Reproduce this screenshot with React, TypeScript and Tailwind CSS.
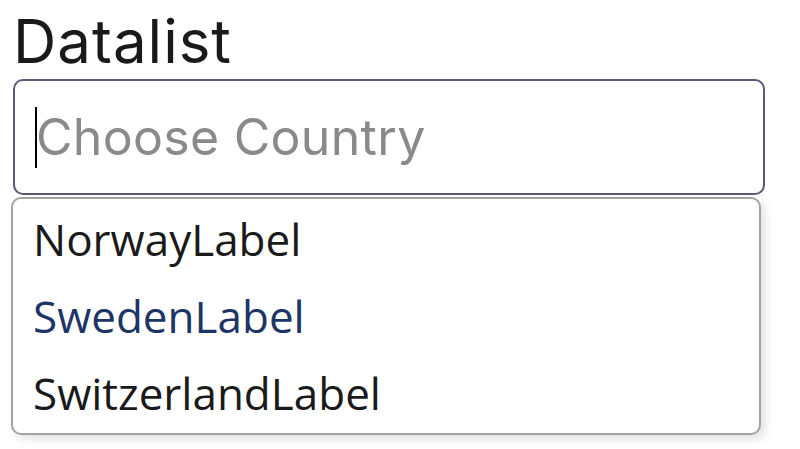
const options = ["NorwayLabel", "SwedenLabel", "SwitzerlandLabel"];

export default function App() {
  return (
    <div
      className="h-[449px] w-[800px] overflow-hidden bg-white pl-[11px] pt-[9px]"
      style={{ fontFamily: '"Open Sans", "Noto Sans", sans-serif' }}
    >
      <h1
        className="pl-[2px] text-[60px] leading-[64px] font-normal tracking-[1px] text-[#1a1a1a]"
        style={{ fontFamily: "Inter, sans-serif" }}
      >
        Datalist
      </h1>
      <div className="ml-[2px] mt-[6px] flex h-[116px] w-[752px] items-center rounded-[10px] border-2 border-[#5b5878] pl-[20px]">
        <span className="h-[61px] w-[2px] bg-black" />
        <span
          className="-ml-[1px] text-[50px] leading-none tracking-[0.3px] text-[#8a8a8a]"
          style={{ fontFamily: "Inter, sans-serif" }}
        >
          Choose Country
        </span>
      </div>
      <ul className="mt-[2px] flex h-[238px] w-[750px] flex-col justify-center gap-[12px] rounded-[10px] border-2 border-[#a3a3a3] bg-white pl-[20px] shadow-[4px_4px_10px_rgba(0,0,0,0.12)]">
        {options.map((o, i) => (
          <li
            key={o}
            className={`text-[44px] leading-[65px] ${i === 1 ? "text-[#1d3566]" : "text-[#1a1a1a]"}`}
          >
            {o}
          </li>
        ))}
      </ul>
    </div>
  );
}
